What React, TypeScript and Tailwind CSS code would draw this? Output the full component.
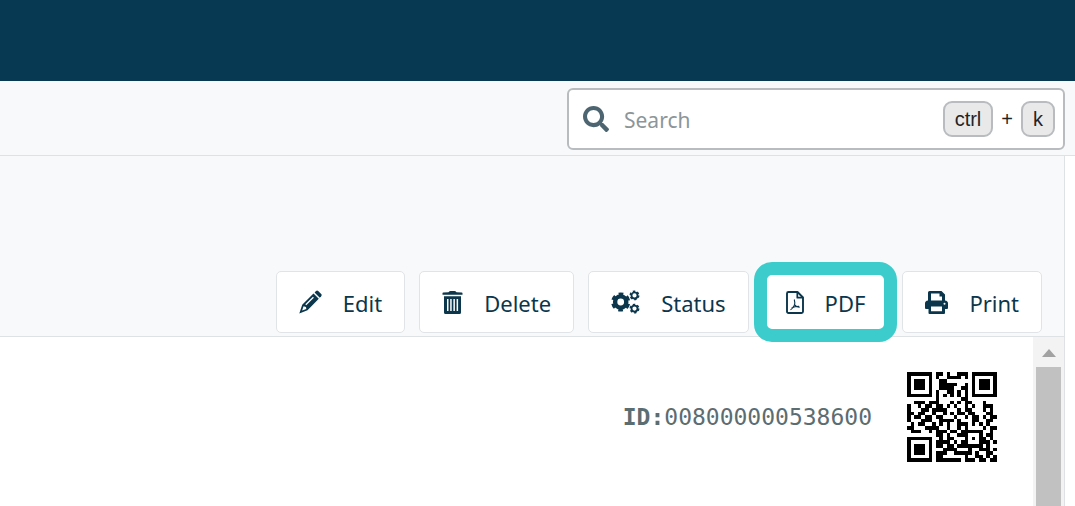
import type { ReactNode } from "react";
import { FaSearch } from "react-icons/fa";

const qrRows = [
  "1111111011010011101111111",
  "1000001010011110101000001",
  "1011101001100000001011101",
  "1011101001111100101011101",
  "1011101001111001101011101",
  "1000001010011010101000001",
  "1111111010101010101111111",
  "0000000010000001100000000",
  "0011101110001010110001000",
  "1001011011010100101001110",
  "1000110111100010110001010",
  "1101100100101011011000110",
  "1011011011000100101101011",
  "1000111001111010001100110",
  "0101100101010011101010100",
  "1100011110010010100001011",
  "0111001011101101111110010",
  "0000000011010011100010110",
  "1111111001011000101011010",
  "1000001011110101100011101",
  "1011101011011011111110100",
  "1011101000111100010011101",
  "1011101011100111110100110",
  "1000001011000000100110101",
  "1111111011111110111011011",
];

function QrCode() {
  const d = qrRows
    .flatMap((row, y) => [...row].map((cell, x) => (cell === "1" ? `M${x} ${y}h1v1h-1z` : "")))
    .join("");
  return (
    <svg viewBox="0 0 25 25" className="size-[90px] text-black" shapeRendering="crispEdges" role="img" aria-label="QR">
      <path d={d} fill="currentColor" />
    </svg>
  );
}

function PencilIcon() {
  return (
    <svg viewBox="0 0 23 24" className="h-6 w-[23px]" fill="currentColor">
      <path d="M15.600 2.400L17 1q1.100-1 2.200 0l3 3q1 1.100 0 2.200l-1.400 1.500z" />
      <path
        fillRule="evenodd"
        d="M14.500 3.500l5.300 5.300L8.500 20.300.3 23.600 3.200 14.800zM4.600 16.200l-1.500 4.300 4.200-1.600-.3-2z"
      />
      <path d="M6.800 14.800l7.600-7.600" stroke="white" strokeWidth="1.3" />
    </svg>
  );
}

function BinIcon() {
  return (
    <svg viewBox="0 0 20 23" className="h-[23px] w-[21px]" fill="currentColor">
      <path d="M0 2.200Q0 1.500 .8 1.500L6 1.300Q7 0 8 0h4q1 0 2 1.300l5.200.2q.8 0 .8.7V3.700H0z" />
      <path
        fillRule="evenodd"
        d="M1.500 5.300h17V21.500a1.500 1.500 0 0 1-1.500 1.500H3a1.500 1.500 0 0 1-1.500-1.500zM4.500 8v12h1.500V8zM7.700 8v12h1.500V8zM10.900 8v12h1.500V8zM14.100 8v12h1.500V8z"
      />
    </svg>
  );
}

function CogsIcon() {
  return (
    <svg viewBox="0 0 29 24" className="h-6 w-[29px]" fill="none" stroke="currentColor">
      <circle cx="9.700" cy="12" r="5.600" strokeWidth="4.400" />
      <circle cx="9.700" cy="12" r="8.200" strokeWidth="2.800" strokeDasharray="4.600 3.990" strokeDashoffset="-2" />
      <circle cx="23.500" cy="5.400" r="3" strokeWidth="1.800" />
      <circle cx="23.500" cy="5.400" r="4.200" strokeWidth="1.500" strokeDasharray="2.400 2" />
      <circle cx="23.500" cy="18.600" r="3" strokeWidth="1.800" />
      <circle cx="23.500" cy="18.600" r="4.200" strokeWidth="1.500" strokeDasharray="2.400 2" />
    </svg>
  );
}

function PdfIcon() {
  return (
    <svg viewBox="0 0 18 23" className="h-[23px] w-[18px]" fill="none" stroke="currentColor" strokeLinejoin="round">
      <path d="M2.500 1h9l5.500 5.500v14a1.500 1.500 0 0 1-1.500 1.500h-13A1.500 1.500 0 0 1 1 20.500v-18A1.500 1.500 0 0 1 2.500 1z" strokeWidth="1.900" />
      <path d="M11.300 1v5.700H17" strokeWidth="1.700" />
      <path d="M8.300 8.500q1 3.500 0 5.800-1.500 3.200-3.800 4.600M8.500 13.500q1.700 2.700 5.200 2.600M5.600 16.900q3.500-1.600 7.400-1.500" strokeWidth="1.100" />
    </svg>
  );
}

function PrinterIcon() {
  return (
    <svg viewBox="0 0 23 23" className="size-[23px]" fill="currentColor">
      <path
        fillRule="evenodd"
        d="M4.500 0h12L20 3.500V9.500q3 .3 3 3v4.500q0 1-1 1h-2v4q0 1-1 1H4.500q-1 0-1-1v-4H1q-1 0-1-1v-4.500q0-2.700 3-3V1.500Q3 0 4.500 0zM6 2.500v7h11V5.500h-2.500v-3zM6 15.500v4.800h11v-4.800z"
      />
      <circle cx="19.500" cy="12.800" r="1" fill="white" />
    </svg>
  );
}

type ActionProps = { icon: ReactNode; label: string; highlighted?: boolean };

function ActionButton({ icon, label, highlighted }: ActionProps) {
  return (
    <button
      type="button"
      className="relative flex h-[62px] items-center gap-[21px] rounded-[5px] border border-[#e1e4e7] bg-white px-[22px] text-[22px] text-[#0b364b]"
    >
      {icon}
      <span className="pt-[3px]">{label}</span>
      {/* ring drawn over the button */}
      {highlighted && (
        <span className="pointer-events-none absolute -inset-x-[10px] -inset-y-[10px] rounded-[18px] border-[13px] border-[#3bcccb]" />
      )}
    </button>
  );
}

export default function App() {
  const actions: ActionProps[] = [
    { label: "Edit", icon: <PencilIcon /> },
    { label: "Delete", icon: <BinIcon /> },
    { label: "Status", icon: <CogsIcon /> },
    { label: "PDF", icon: <PdfIcon />, highlighted: true },
    { label: "Print", icon: <PrinterIcon /> },
  ];

  return (
    <div className="flex min-h-screen flex-col bg-white font-['Noto_Sans',sans-serif]">
      <header className="h-[81px] bg-[#073a52]" />

      {/* Search */}
      <div className="flex h-[75px] items-end justify-end border-b border-[#dfe2e4] bg-[#f8f9fb] pr-[10px] pb-[5px]">
        <label className="flex h-[62px] w-[498px] items-center rounded-[6px] border-2 border-[#b9bcbe] bg-white pr-2 pl-[14px]">
          <FaSearch className="size-[26px] shrink-0 text-[#4c6570]" />
          <input
            type="text"
            placeholder="Search"
            aria-label="Search"
            className="ml-[15px] min-w-0 flex-1 bg-transparent pt-[3px] text-[21px] text-[#33454e] outline-none placeholder:text-[#8c9699]"
          />
          <span className="flex items-center gap-2 font-['Liberation_Sans',sans-serif] text-[20px] text-[#1f2428]">
            <kbd className="flex h-9 items-center rounded-[9px] border-2 border-[#b9bcbe] bg-[#e9e9e9] px-[10px] font-[inherit]">ctrl</kbd>
            <span>+</span>
            <kbd className="flex h-9 items-center rounded-[9px] border-2 border-[#b9bcbe] bg-[#e9e9e9] px-[10px] font-[inherit]">k</kbd>
          </span>
        </label>
      </div>

      <main className="mr-[10px] flex flex-1 flex-col border-r border-[#dfe2e4]">
        {/* Toolbar */}
        <div className="flex h-[181px] items-end justify-end gap-[14px] border-b border-[#dfe2e4] bg-[#f8f9fb] pr-[22px] pb-[3px]">
          {actions.map((action) => (
            <ActionButton key={action.label} {...action} />
          ))}
        </div>

        {/* Document */}
        <div className="flex flex-1">
          <div className="flex flex-1 items-start justify-end pt-[35px] pr-9">
            <div className="flex items-center gap-[35px]">
              <p className="font-['DejaVu_Sans_Mono',monospace] text-[23px] text-[#5c6d72]">
                <strong>ID:</strong>008000000538600
              </p>
              <QrCode />
            </div>
          </div>
          <div className="flex w-[31px] flex-col items-center bg-[#f3f3f3]">
            <svg viewBox="0 0 14 8" className="mt-3 mb-[10px] h-2 w-[14px]" fill="#a2a2a2">
              <path d="M7 0l7 8H0z" />
            </svg>
            <div className="w-[25px] flex-1 bg-[#c1c1c1]" />
          </div>
        </div>
      </main>
    </div>
  );
}
